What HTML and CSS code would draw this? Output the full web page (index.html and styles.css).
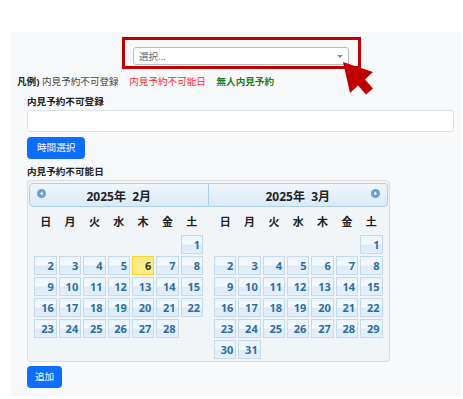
FILE: index.html
```html
<!DOCTYPE html>
<html lang="ja">
<head>
    <meta charset="UTF-8">
    <meta name="viewport" content="width=device-width, initial-scale=1.0">
    <title>内見予約不可登録</title>
    <link rel="stylesheet" href="styles.css">
</head>
<body>

    <div class="panel">
        <div class="picker-row">
            <div class="callout">
                <div class="select-box">
                    <span class="placeholder">選択...</span>
                    <span class="caret"></span>
                </div>
            </div>
            <svg class="pointer" width="40" height="40" viewBox="0 0 40 40">
                <polygon points="3,4 10,35 18,27.5 26,36.5 33,30.5 25,21.5 33,14" fill="#c00000"/>
            </svg>
        </div>

        <p class="legend">
            <span class="legend-title">凡例)</span>
            <span class="legend-item">内見予約不可登録</span>
            <span class="legend-item red">内見予約不可能日</span>
            <span class="legend-item green">無人内見予約</span>
        </p>

        <div class="form">
            <label class="form-label">内見予約不可登録</label>
            <div class="text-input"></div>
            <button class="btn btn-time">時間選択</button>

            <label class="form-label">内見予約不可能日</label>
            <div class="datepicker">
                <!-- February -->
                <div class="dp-group">
                    <div class="dp-header first">
                        <span class="dp-nav prev">
                            <svg width="9" height="9" viewBox="0 0 9 9"><circle cx="4.5" cy="4.5" r="4.5" fill="#6d9fcc"/><polygon points="5.6,2.5 5.6,6.5 2.8,4.5" fill="#fff"/></svg>
                        </span>
                        <span class="dp-title">2025年&nbsp; 2月</span>
                    </div>
                    <table class="dp-table">
                        <thead>
                            <tr><th>日</th><th>月</th><th>火</th><th>水</th><th>木</th><th>金</th><th>土</th></tr>
                        </thead>
                        <tbody>
                            <tr><td></td><td></td><td></td><td></td><td></td><td></td><td><a>1</a></td></tr>
                            <tr><td><a>2</a></td><td><a>3</a></td><td><a>4</a></td><td><a>5</a></td><td><a class="today">6</a></td><td><a>7</a></td><td><a>8</a></td></tr>
                            <tr><td><a>9</a></td><td><a>10</a></td><td><a>11</a></td><td><a>12</a></td><td><a>13</a></td><td><a>14</a></td><td><a>15</a></td></tr>
                            <tr><td><a>16</a></td><td><a>17</a></td><td><a>18</a></td><td><a>19</a></td><td><a>20</a></td><td><a>21</a></td><td><a>22</a></td></tr>
                            <tr><td><a>23</a></td><td><a>24</a></td><td><a>25</a></td><td><a>26</a></td><td><a>27</a></td><td><a>28</a></td><td></td></tr>
                        </tbody>
                    </table>
                </div>

                <!-- March -->
                <div class="dp-group">
                    <div class="dp-header last">
                        <span class="dp-title">2025年&nbsp; 3月</span>
                        <span class="dp-nav next">
                            <svg width="9" height="9" viewBox="0 0 9 9"><circle cx="4.5" cy="4.5" r="4.5" fill="#6d9fcc"/><polygon points="3.4,2.5 3.4,6.5 6.2,4.5" fill="#fff"/></svg>
                        </span>
                    </div>
                    <table class="dp-table">
                        <thead>
                            <tr><th>日</th><th>月</th><th>火</th><th>水</th><th>木</th><th>金</th><th>土</th></tr>
                        </thead>
                        <tbody>
                            <tr><td></td><td></td><td></td><td></td><td></td><td></td><td><a>1</a></td></tr>
                            <tr><td><a>2</a></td><td><a>3</a></td><td><a>4</a></td><td><a>5</a></td><td><a>6</a></td><td><a>7</a></td><td><a>8</a></td></tr>
                            <tr><td><a>9</a></td><td><a>10</a></td><td><a>11</a></td><td><a>12</a></td><td><a>13</a></td><td><a>14</a></td><td><a>15</a></td></tr>
                            <tr><td><a>16</a></td><td><a>17</a></td><td><a>18</a></td><td><a>19</a></td><td><a>20</a></td><td><a>21</a></td><td><a>22</a></td></tr>
                            <tr><td><a>23</a></td><td><a>24</a></td><td><a>25</a></td><td><a>26</a></td><td><a>27</a></td><td><a>28</a></td><td><a>29</a></td></tr>
                            <tr><td><a>30</a></td><td><a>31</a></td><td></td><td></td><td></td><td></td><td></td></tr>
                        </tbody>
                    </table>
                </div>
            </div>

            <button class="btn btn-add">追加</button>
        </div>
    </div>

</body>
</html>
```

FILE: styles.css
```css
body {
    margin: 0;
    background: #fff;
    font-family: "Noto Sans", "Noto Sans CJK JP", sans-serif;
    color: #222;
}

.panel {
    margin: 32px 1px 0 10px;
    height: 364px;
    background: #f8f9fa;
    padding: 5px 8px 0 7px;
    box-sizing: border-box;
}

/* select with red callout */
.picker-row {
    position: relative;
    padding-left: 105px;
}

.callout {
    width: 239px;
    height: 32px;
    box-sizing: border-box;
    border: 3px solid #c00000;
    padding: 7px 9px 0 8px;
}

.select-box {
    height: 18px;
    box-sizing: border-box;
    border: 1px solid #bbb;
    border-radius: 3px;
    background: #fff;
    display: flex;
    align-items: center;
    justify-content: space-between;
    padding: 0 5px 0 5px;
}

.placeholder {
    font-size: 9.6px;
    color: #666;
}

.caret {
    width: 0;
    height: 0;
    border-left: 3px solid transparent;
    border-right: 3px solid transparent;
    border-top: 3px solid #888;
}

.pointer {
    position: absolute;
    left: 323px;
    top: 21px;
}

/* legend */
.legend {
    margin: 6px 0 0;
    font-size: 9.6px;
    line-height: 14px;
    color: #444;
}

.legend-title {
    font-weight: bold;
    color: #222;
}

.legend-item {
    margin-right: 8px;
}

.legend-item.red {
    color: #ff2a2a;
}

.legend-item.green {
    color: #1d7d1d;
    font-weight: bold;
}

/* form */
.form {
    padding-left: 10px;
    display: flex;
    flex-direction: column;
    align-items: flex-start;
}

.form-label {
    font-size: 9.6px;
    line-height: 14px;
    font-weight: bold;
    margin-top: 6px;
}

.text-input {
    align-self: stretch;
    height: 22px;
    margin-top: 1px;
    box-sizing: border-box;
    background: #fff;
    border: 1px solid #dee2e6;
    border-radius: 3px;
}

.btn {
    height: 22px;
    border: none;
    border-radius: 4px;
    background: #0d6efd;
    color: #fff;
    font-family: inherit;
    font-size: 9.6px;
    line-height: 22px;
    cursor: pointer;
}

.btn-time {
    margin-top: 5px;
    padding: 0 10px;
}

.btn-add {
    margin-top: 4px;
    padding: 0 8px;
}

/* datepicker (cupertino-ish) */
.datepicker {
    width: 363px;
    margin-top: 1px;
    box-sizing: border-box;
    border: 1px solid #dddddd;
    border-radius: 4px;
    background: #f2f5f7;
    padding: 2px 1px 1px;
    display: flex;
}

.dp-group {
    width: 50%;
}

.dp-header {
    position: relative;
    height: 24px;
    box-sizing: border-box;
    border: 1px solid #aed0ea;
    background: linear-gradient(#f0f6fb, #d9eaf7);
    text-align: center;
}

.dp-header.first {
    border-radius: 4px 0 0 4px;
}

.dp-header.last {
    border-left: none;
    border-radius: 0 4px 4px 0;
}

.dp-title {
    font-size: 12px;
    font-weight: bold;
    line-height: 21px;
    color: #222;
}

.dp-nav {
    position: absolute;
    top: 5px;
    display: flex;
}

.dp-nav.prev {
    left: 7px;
}

.dp-nav.next {
    right: 7px;
}

.dp-table {
    width: 95%;
    margin: 0 auto;
    border-collapse: collapse;
    table-layout: fixed;
}

.dp-table th {
    height: 27px;
    padding: 0;
    font-size: 11px;
    font-weight: bold;
    color: #222;
    text-align: center;
}

.dp-table td {
    padding: 1px;
    height: 19px;
}

.dp-table td a {
    display: block;
    height: 19px;
    box-sizing: border-box;
    border: 1px solid #c5dbec;
    background: linear-gradient(#eaf4fd 0%, #f4f9fe 45%, #dcebf8 55%, #e4f0fb 100%);
    color: #2e6e9e;
    font-size: 11px;
    font-weight: bold;
    line-height: 17px;
    text-align: right;
    padding-right: 2px;
}

.dp-table td a.today {
    border-color: #fad42e;
    background: #fbec88;
    color: #363636;
}
```
